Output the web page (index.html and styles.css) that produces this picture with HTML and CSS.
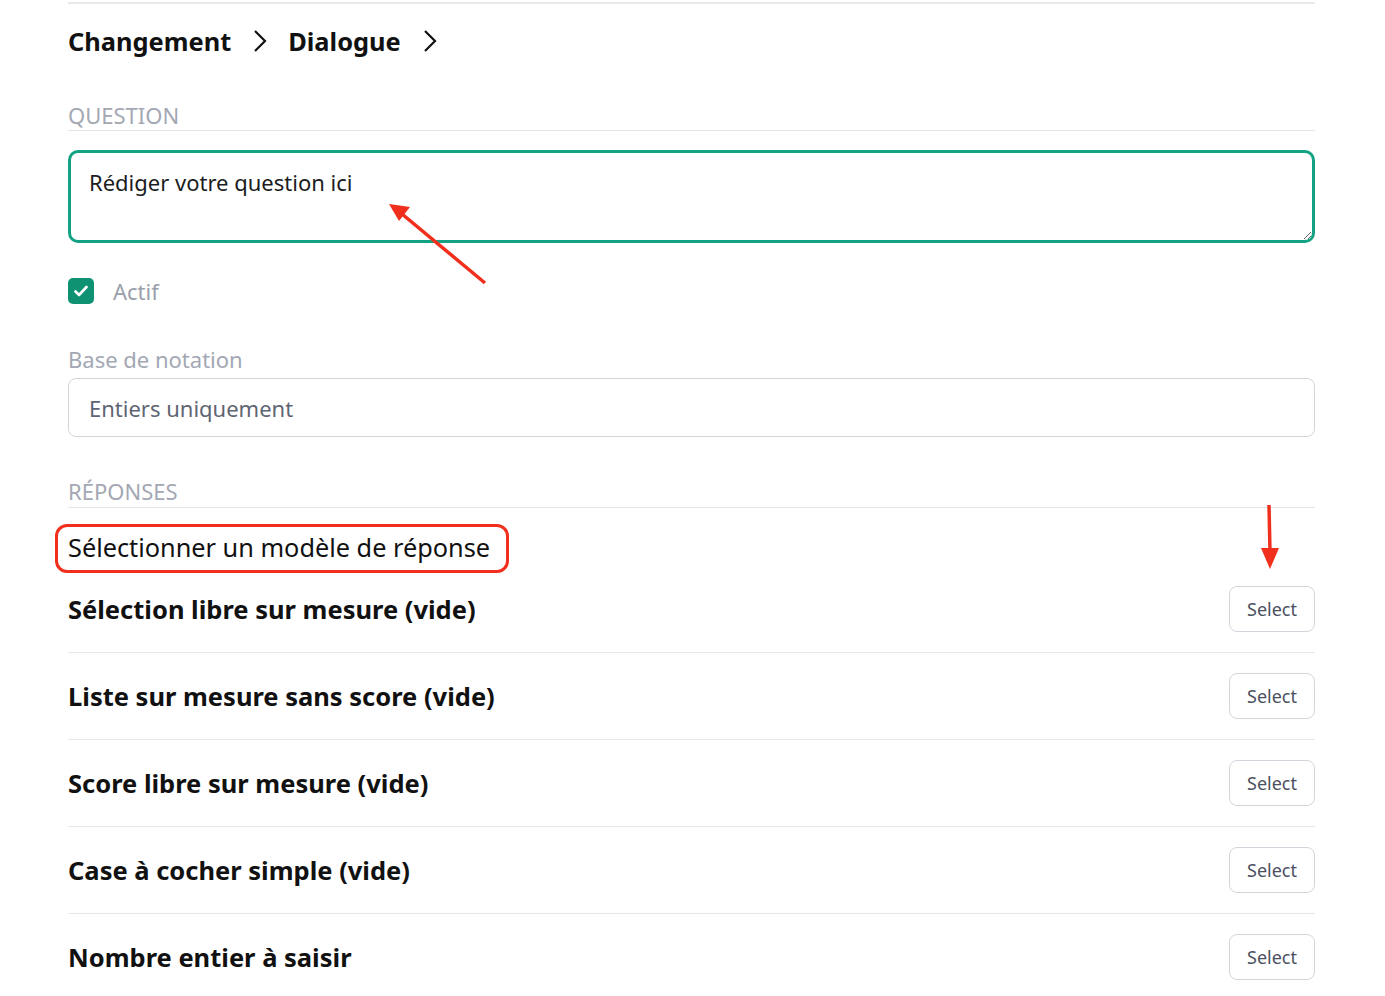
FILE: index.html
```html
<!DOCTYPE html>
<html lang="fr">
<head>
  <meta charset="UTF-8" />
  <meta name="viewport" content="width=device-width, initial-scale=1.0"/>
  <title>Dialogue - Question</title>
  <link rel="stylesheet" href="styles.css">
</head>
<body>

  <div class="page">
    <div class="container">
      <nav class="crumbs">
        <span class="crumb">Changement</span>
        <svg class="chev" width="14" height="24" viewBox="0 0 14 24"><path d="M2 2 L12 12 L2 22" fill="none" stroke="#111" stroke-width="2.2"/></svg>
        <span class="crumb">Dialogue</span>
        <svg class="chev" width="14" height="24" viewBox="0 0 14 24"><path d="M2 2 L12 12 L2 22" fill="none" stroke="#111" stroke-width="2.2"/></svg>
      </nav>

      <div class="section-title">QUESTION</div>
      <textarea class="question" id="question">Rédiger votre question ici</textarea>

      <label class="check-row">
        <span class="check">
          <svg width="14" height="12" viewBox="0 0 14 12"><path d="M1.5 6.5 L5 10 L12.5 2" fill="none" stroke="#fff" stroke-width="2.6" stroke-linecap="round" stroke-linejoin="round"/></svg>
        </span>
        <span class="check-label">Actif</span>
      </label>

      <div class="field-label">Base de notation</div>
      <div class="field">Entiers uniquement</div>

      <div class="section-title responses">RÉPONSES</div>
      <div class="template-title">Sélectionner un modèle de réponse</div>

      <div class="templates">
        <div class="template-row">
          <span class="template-name">Sélection libre sur mesure (vide)</span>
          <button class="select-btn">Select</button>
        </div>
        <div class="template-row">
          <span class="template-name">Liste sur mesure sans score (vide)</span>
          <button class="select-btn">Select</button>
        </div>
        <div class="template-row">
          <span class="template-name">Score libre sur mesure (vide)</span>
          <button class="select-btn">Select</button>
        </div>
        <div class="template-row">
          <span class="template-name">Case à cocher simple (vide)</span>
          <button class="select-btn">Select</button>
        </div>
        <div class="template-row">
          <span class="template-name">Nombre entier à saisir</span>
          <button class="select-btn">Select</button>
        </div>
      </div>
    </div>

    <!-- red annotations drawn on top of the form -->
    <div class="note-box"></div>
    <svg class="notes" width="1385" height="996" viewBox="0 0 1385 996">
      <line x1="485" y1="283" x2="402" y2="214" stroke="#f0301c" stroke-width="3.5"/>
      <polygon points="389,204 410,207 399,221" fill="#f0301c"/>
      <line x1="1269" y1="505" x2="1270" y2="552" stroke="#f0301c" stroke-width="3.5"/>
      <polygon points="1261,548 1279,548 1270,569" fill="#f0301c"/>
    </svg>
  </div>

</body>
</html>
```

FILE: styles.css
```css
body {
  margin: 0;
  background: #fff;
  font-family: 'Noto Sans', 'Open Sans', sans-serif;
  color: #111;
}

.page {
  position: relative;
  width: 1385px;
  min-height: 996px;
  overflow: hidden;
}

.container {
  width: 1247px;
  margin: 2px 0 0 68px;
  border-top: 2px solid #e9e9ea;
  box-sizing: border-box;
}

.crumbs {
  display: flex;
  align-items: center;
  margin-top: 19px;
  height: 36px;
}

.crumb {
  font-size: 25.4px;
  font-weight: bold;
  line-height: 36px;
}

.chev {
  margin: 0 21px 0 22px;
}

.section-title {
  margin-top: 43px;
  font-size: 22px;
  line-height: 26px;
  color: #a3a8b3;
  padding-bottom: 2px;
  border-bottom: 1.5px solid #e3e5ea;
}

.question {
  display: block;
  width: 100%;
  height: 93px;
  margin-top: 19px;
  box-sizing: border-box;
  padding: 14px 18px;
  border: 3px solid #13a384;
  border-radius: 10px;
  font-family: inherit;
  font-size: 22px;
  line-height: 30px;
  color: #1b1d22;
  outline: none;
}

.check-row {
  display: flex;
  align-items: center;
  margin-top: 35px;
  height: 26px;
}

.check {
  width: 26px;
  height: 26px;
  border-radius: 5px;
  background: #0f9272;
  display: flex;
  align-items: center;
  justify-content: center;
}

.check-label {
  margin-left: 19px;
  font-size: 22px;
  color: #9aa0ab;
}

.field-label {
  margin-top: 41px;
  font-size: 22px;
  line-height: 28px;
  color: #a3a8b3;
}

.field {
  margin-top: 5px;
  height: 59px;
  box-sizing: border-box;
  padding: 0 20px;
  display: flex;
  align-items: center;
  border: 1.5px solid #d2d6dc;
  border-radius: 8px;
  font-size: 22px;
  color: #5f6573;
}

.section-title.responses {
  margin-top: 41px;
  padding-bottom: 3px;
}

.template-title {
  margin-top: 22px;
  font-size: 25.3px;
  line-height: 34px;
  color: #111;
}

.templates {
  margin-top: 2px;
}

.template-row {
  display: flex;
  align-items: center;
  justify-content: space-between;
  padding: 20px 0;
  border-bottom: 1.5px solid #e6e7ea;
}

.template-row:last-child {
  border-bottom: none;
}

.template-name {
  font-size: 25.5px;
  font-weight: bold;
}

.select-btn {
  width: 86px;
  height: 46px;
  background: #fff;
  border: 1.5px solid #d2d6dc;
  border-radius: 8px;
  font-family: inherit;
  font-size: 18px;
  color: #4a5060;
  cursor: pointer;
}

.select-btn:hover {
  background: #f6f7f9;
}

.note-box {
  position: absolute;
  left: 55px;
  top: 524px;
  width: 454px;
  height: 49px;
  box-sizing: border-box;
  border: 3px solid #f0301c;
  border-radius: 12px;
  pointer-events: none;
}

.notes {
  position: absolute;
  left: 0;
  top: 0;
  pointer-events: none;
}
```
